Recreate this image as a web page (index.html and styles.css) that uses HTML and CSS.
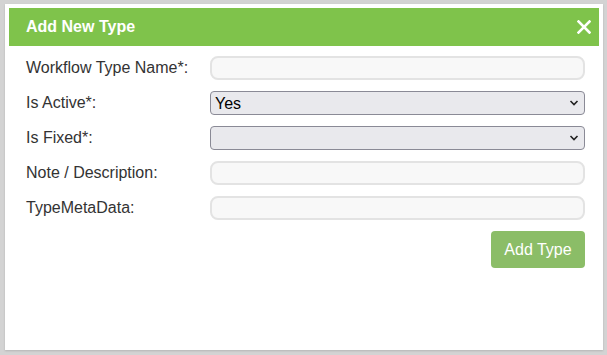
FILE: index.html
```html
<!DOCTYPE html>
<html lang="en">
<head>
	<meta charset="UTF-8">
	<title>Add New Type</title>
	<link rel="stylesheet" href="styles.css">
</head>
<body>
	<div class="dialog">
		<div class="header">
			<span class="title">Add New Type</span>
			<svg class="close" width="14" height="14" viewBox="0 0 14 14">
				<path d="M1.5 1.5 L12.5 12.5 M12.5 1.5 L1.5 12.5" stroke="#fff" stroke-width="2.6" stroke-linecap="square"/>
			</svg>
		</div>
		<form class="form">
			<div class="row">
				<label>Workflow Type Name*:</label>
				<input type="text" class="field">
			</div>
			<div class="row">
				<label>Is Active*:</label>
				<div class="selectbox">
					<select class="pick">
						<option>Yes</option>
						<option>No</option>
					</select>
					<svg class="arrow" width="10" height="6" viewBox="0 0 10 6"><path d="M1.5 1 L5 4.5 L8.5 1" fill="none" stroke="#222" stroke-width="1.6"/></svg>
				</div>
			</div>
			<div class="row">
				<label>Is Fixed*:</label>
				<div class="selectbox">
					<select class="pick">
						<option></option>
						<option>Yes</option>
						<option>No</option>
					</select>
					<svg class="arrow" width="10" height="6" viewBox="0 0 10 6"><path d="M1.5 1 L5 4.5 L8.5 1" fill="none" stroke="#222" stroke-width="1.6"/></svg>
				</div>
			</div>
			<div class="row">
				<label>Note / Description:</label>
				<input type="text" class="field">
			</div>
			<div class="row">
				<label>TypeMetaData:</label>
				<input type="text" class="field">
			</div>
			<div class="actions">
				<button type="button" class="btn">Add Type</button>
			</div>
		</form>
	</div>
</body>
</html>
```
FILE: styles.css
```css
html, body{
	margin: 0;
	padding: 0;
}
body{
	background: #d3d3d3;
	font-family: "Liberation Sans", Arial, sans-serif;
	padding: 4px 4px 5px 5px;
	height: 355px;
	box-sizing: border-box;
}
.dialog{
	background: #fff;
	height: 346px;
	padding: 4px;
	box-sizing: border-box;
	box-shadow: 0 1px 2px rgba(0,0,0,0.15);
}
.header{
	background: #7fc34b;
	height: 38px;
	display: flex;
	align-items: center;
	justify-content: space-between;
	padding: 0 8px 0 17px;
	color: #fff;
}
.title{
	font-weight: bold;
	font-size: 16px;
}
.close{
	display: block;
	cursor: pointer;
}
.form{
	padding: 10px 14px 0 17px;
}
.row{
	display: flex;
	align-items: center;
	height: 24px;
	margin-bottom: 11px;
}
.row label{
	width: 184px;
	font-size: 16px;
	color: #333;
}
.field{
	flex: 1;
	height: 24px;
	box-sizing: border-box;
	border: 2px solid #e3e3e3;
	border-radius: 8px;
	background: #f8f8f8;
	outline: none;
}
.selectbox{
	flex: 1;
	position: relative;
	height: 24px;
}
.pick{
	appearance: none;
	-webkit-appearance: none;
	width: 100%;
	height: 24px;
	box-sizing: border-box;
	padding: 0 4px;
	border: 1px solid #8a8a96;
	border-radius: 4px;
	background-color: #e9e9ed;
	font-family: "Liberation Sans", Arial, sans-serif;
	font-size: 16px;
	color: #000;
}
.arrow{
	position: absolute;
	right: 6px;
	top: 9px;
	pointer-events: none;
}
.actions{
	display: flex;
	justify-content: flex-end;
}
.btn{
	background: #8bbd67;
	color: #fff;
	border: none;
	border-radius: 4px;
	font-family: "Liberation Sans", Arial, sans-serif;
	font-size: 16px;
	width: 94px;
	height: 37px;
}
```
